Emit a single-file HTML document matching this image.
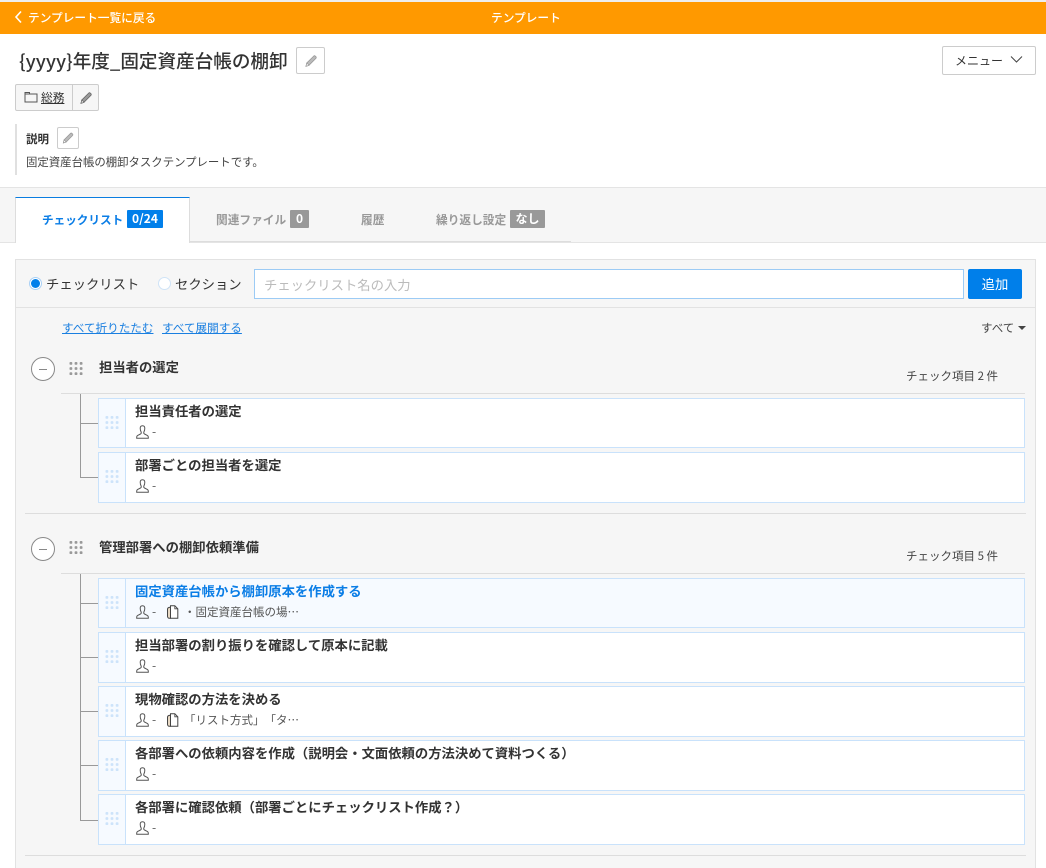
<!DOCTYPE html>
<html lang="ja"><head><meta charset="utf-8"><title>テンプレート</title>
<style>
*{box-sizing:border-box}
html{margin:0;padding:0;width:1046px;height:868px;overflow:hidden}
body{margin:0;padding:0;width:1046px;height:868px;overflow:hidden;background:#fff;position:relative;font-family:"Noto Sans CJK JP","Liberation Sans",sans-serif;color:#333;text-spacing-trim:space-all}
.a{position:absolute;white-space:nowrap}
.pen{position:absolute;background:#fff;border:1px solid #ccc;border-radius:2px}
.pen svg{position:absolute;left:50%;top:50%;transform:translate(-50%,-50%)}
.tab{font-size:11.700px;font-weight:700;color:#999;line-height:18px}
.badge{position:absolute;background:#999;color:#fff;font-size:12px;font-weight:700;text-align:center;border-radius:1px;height:18px;line-height:18px}
.card{position:absolute;left:98px;width:927px;background:#fff;border:1px solid #c9e2fb}
.card.hl{background:#f6faff}
.grip{position:absolute;left:0;top:0;bottom:0;width:27px;background:#f6faff;border-right:1px solid #c9e2fb}
.grip svg{position:absolute;left:6px;top:17px}
.t{position:absolute;left:36px;top:2px;font-size:13.330px;font-weight:700;line-height:20px;white-space:nowrap;color:#333}
.u{position:absolute;left:37px;top:26px}
.d{position:absolute;left:53px;top:24px;font-size:12px;line-height:18px;color:#555}
.c{position:absolute;left:67px;top:26px}
.n{position:absolute;left:85px;top:24px;font-size:11.500px;line-height:18px;color:#555;white-space:nowrap}
.h{position:absolute;background:#ddd;height:1px}
.v{position:absolute;background:#999}
.sec{font-size:13.330px;font-weight:700;line-height:20px;color:#333}
.cnt{font-size:11.500px;line-height:16px;color:#444}
.minus{position:absolute;left:31px;width:24px;height:24px;border:1px solid #888;border-radius:50%;background:#fff}
.minus:after{content:"";position:absolute;left:7px;top:10.500px;width:8px;height:1px;background:#888}
</style></head><body>
<svg width="0" height="0" style="position:absolute">
<symbol id="pen" viewBox="0 0 14 14"><path d="M2 12.300l.8-3.300L9.700 2.100c.5-.5 1.100-.5 1.600 0l.6.600c.5.500.5 1.100 0 1.600L5 11.300z" fill="#bbb" stroke="#999" stroke-width=".8"/><path d="M2 12.300l.8-3.300 2.200 2.300z" fill="#fff" stroke="#999" stroke-width=".7"/></symbol>
<symbol id="pen2" viewBox="0 0 14 14"><path d="M2 12.300l.8-3.300L9.700 2.100c.5-.5 1.100-.5 1.600 0l.6.600c.5.500.5 1.100 0 1.600L5 11.300z" fill="#999" stroke="#666" stroke-width=".8"/><path d="M2 12.300l.8-3.300 2.200 2.300z" fill="#fff" stroke="#666" stroke-width=".7"/></symbol>
<symbol id="user" viewBox="0 0 13 14"><path d="M6.500 .7C4.900 .7 4.200 1.800 4.200 3.300c0 1.700.5 3.100 1 3.900.2.800 0 1.400-.7 1.800L1.700 10.400c-.6.400-1 .9-1 1.600v1.200h11.600V12c0-.7-.4-1.200-1-1.600L8.500 9c-.7-.4-.9-1-.7-1.800.5-.8 1-2.200 1-3.900C8.800 1.800 8.100 .7 6.500 .7z" fill="none" stroke="#555" stroke-width="1"/></symbol>
<symbol id="clip" viewBox="0 0 13 14"><path d="M4.500 .8h4.300l3 3v9.400H4.500z" fill="#fff" stroke="#444" stroke-width="1"/><path d="M8.800 .8v3h3" fill="none" stroke="#444" stroke-width=".8"/><path d="M4.500 2.300C2.600 2.300 1.500 3 1.500 4.300v6.900c0 1.100.8 2 1.700 2h1.300V2.300z" fill="#e8d9c4" stroke="#444" stroke-width="1"/></symbol>
<symbol id="dots" viewBox="0 0 14 14"><g fill="currentColor"><rect x="0" y="0" width="3" height="3" rx="1"/><rect x="5.500" y="0" width="3" height="3" rx="1"/><rect x="11" y="0" width="3" height="3" rx="1"/><rect x="0" y="5.500" width="3" height="3" rx="1"/><rect x="5.500" y="5.500" width="3" height="3" rx="1"/><rect x="11" y="5.500" width="3" height="3" rx="1"/><rect x="0" y="11" width="3" height="3" rx="1"/><rect x="5.500" y="11" width="3" height="3" rx="1"/><rect x="11" y="11" width="3" height="3" rx="1"/></g></symbol>
</svg>

<div class="a" style="left:0;top:0;width:1046px;height:2px;background:#eee"></div>
<div class="a" style="left:0;top:2px;width:1046px;height:32px;background:#ff9900"></div>
<svg class="a" style="left:14px;top:10px" width="9" height="14" viewBox="0 0 9 14"><path d="M7 1.500L2 7l5 5.500" fill="none" stroke="#fff" stroke-width="1.600"/></svg>
<div class="a" style="left:28px;top:9px;font-size:11.700px;font-weight:500;color:#fff;line-height:18px">テンプレート一覧に戻る</div>
<div class="a" style="left:491px;top:9px;font-size:11.700px;font-weight:500;color:#fff;line-height:18px">テンプレート</div>

<div class="a" style="left:19px;top:47px;font-size:18.600px;font-weight:500;line-height:28px;color:#333">{yyyy}年度_固定資産台帳の棚卸</div>
<div class="pen" style="left:296px;top:47px;width:29px;height:27px"><svg width="14" height="14"><use href="#pen"/></svg></div>

<div class="a" style="left:942px;top:46px;width:94px;height:29px;border:1px solid #ccc;border-radius:2px;background:#fff"></div>
<div class="a" style="left:955px;top:52px;font-size:12px;line-height:17px;color:#333">メニュー</div>
<svg class="a" style="left:1010px;top:55px" width="13" height="9" viewBox="0 0 13 9"><path d="M1 1.500l5.500 5.500 5.500-5.500" fill="none" stroke="#444" stroke-width="1"/></svg>

<div class="a" style="left:15px;top:84px;width:84px;height:27px;border:1px solid #ccc;border-radius:2px;background:#f6f6f6"></div>
<div class="a" style="left:72px;top:85px;width:1px;height:25px;background:#ccc"></div>
<svg class="a" style="left:24px;top:91px" width="14" height="12" viewBox="0 0 14 12"><path d="M1 1.500h4.500v1.500H13v8H1z" fill="none" stroke="#555" stroke-width="1"/><path d="M1 3h5" stroke="#555" stroke-width="1"/></svg>
<div class="a" style="left:41px;top:89px;font-size:11.700px;line-height:18px;color:#333;text-decoration:underline">総務</div>
<svg class="a" style="left:79px;top:91px" width="14" height="14"><use href="#pen2"/></svg>

<div class="a" style="left:15px;top:124px;width:2px;height:51px;background:#e0e0e0"></div>
<div class="a" style="left:26px;top:131px;font-size:11.500px;font-weight:700;line-height:17px;color:#333">説明</div>
<div class="pen" style="left:57px;top:127px;width:22px;height:22px"><svg width="13" height="13"><use href="#pen"/></svg></div>
<div class="a" style="left:26px;top:154px;font-size:11.400px;line-height:16px;color:#444">固定資産台帳の棚卸タスクテンプレートです。</div>

<div class="a" style="left:0;top:187px;width:1046px;height:56px;background:#f6f6f6;border-top:1px solid #e4e4e4;border-bottom:1px solid #e4e4e4"></div>
<div class="a" style="left:190px;top:241px;width:381px;height:1px;background:#ddd"></div>
<div class="a" style="left:15px;top:197px;width:175px;height:46px;background:#fff;border:1px solid #ddd;border-top:1px solid #0a7de0;border-bottom:0"></div>
<div class="a tab" style="left:42px;top:211px;color:#0a7de6;font-size:11.600px">チェックリスト</div>
<div class="badge a" style="left:127px;top:210px;width:36px;background:#007fea">0/24</div>
<div class="a tab" style="left:216px;top:211px">関連ファイル</div>
<div class="badge a" style="left:290px;top:210px;width:19px">0</div>
<div class="a tab" style="left:361px;top:211px">履歴</div>
<div class="a tab" style="left:436px;top:211px">繰り返し設定</div>
<div class="badge a" style="left:510px;top:210px;width:35px">なし</div>

<div class="a" style="left:15px;top:259px;width:1021px;height:609px;background:#f6f6f6;border:1px solid #e2e2e2;border-bottom:0"></div>
<div class="a" style="left:16px;top:307px;width:1019px;height:1px;background:#e2e2e2"></div>

<div class="a" style="left:29px;top:277px;width:13px;height:13px;border-radius:50%;background:#fff;border:1px solid #a9d0f5"></div>
<div class="a" style="left:31px;top:279px;width:9px;height:9px;border-radius:50%;background:#007fea"></div>
<div class="a" style="left:46px;top:274px;font-size:13.330px;line-height:19px;color:#333">チェックリスト</div>
<div class="a" style="left:158px;top:277px;width:13px;height:13px;border-radius:50%;background:#fff;border:1px solid #cfe3f7"></div>
<div class="a" style="left:175px;top:274px;font-size:13.330px;line-height:19px;color:#333">セクション</div>
<div class="a" style="left:254px;top:269px;width:710px;height:30px;background:#fff;border:1px solid #9ccbf5"></div>
<div class="a" style="left:264px;top:275px;font-size:13.330px;line-height:19px;color:#bbb">チェックリスト名の入力</div>
<div class="a" style="left:968px;top:269px;width:54px;height:30px;background:#007fea;border-radius:2px;color:#fff;font-size:13.330px;line-height:30px;text-align:center">追加</div>

<div class="a" style="left:62px;top:320px;font-size:11.600px;line-height:17px;color:#1a7fe0;text-decoration:underline">すべて折りたたむ</div>
<div class="a" style="left:162px;top:320px;font-size:11.600px;line-height:17px;color:#1a7fe0;text-decoration:underline">すべて展開する</div>
<div class="a" style="left:981px;top:320px;font-size:11.500px;line-height:17px;color:#444">すべて</div>
<div class="a" style="left:1018px;top:326px;width:0;height:0;border-left:4px solid transparent;border-right:4px solid transparent;border-top:4px solid #444"></div>

<!-- section 1 -->
<div class="minus" style="top:357px"></div>
<svg class="a" style="left:69px;top:362px;color:#999" width="14" height="13"><use href="#dots"/></svg>
<div class="a sec" style="left:99px;top:357px">担当者の選定</div>
<div class="a cnt" style="left:906px;top:368px">チェック項目 2 件</div>
<div class="h" style="left:61px;top:393px;width:964px"></div>
<div class="v" style="left:80px;top:394px;width:1px;height:84px"></div>
<div class="v" style="left:80px;top:423px;width:18px;height:1px"></div>
<div class="v" style="left:80px;top:477px;width:18px;height:1px"></div>

<div class="card" style="top:398px;height:50px"><div class="grip" style="color:#cde3fa"><svg width="14" height="13"><use href="#dots"/></svg></div><div class="t">担当責任者の選定</div><svg class="u" width="13" height="14"><use href="#user"/></svg><div class="d">-</div></div>
<div class="card" style="top:452px;height:51px"><div class="grip" style="color:#cde3fa"><svg width="14" height="13"><use href="#dots"/></svg></div><div class="t">部署ごとの担当者を選定</div><svg class="u" width="13" height="14"><use href="#user"/></svg><div class="d">-</div></div>

<div class="h" style="left:25px;top:513px;width:1001px"></div>

<!-- section 2 -->
<div class="minus" style="top:537px"></div>
<svg class="a" style="left:69px;top:541px;color:#999" width="14" height="13"><use href="#dots"/></svg>
<div class="a sec" style="left:99px;top:537px">管理部署への棚卸依頼準備</div>
<div class="a cnt" style="left:906px;top:548px">チェック項目 5 件</div>
<div class="h" style="left:61px;top:573px;width:964px"></div>
<div class="v" style="left:80px;top:574px;width:1px;height:247px"></div>
<div class="v" style="left:80px;top:603px;width:18px;height:1px"></div>
<div class="v" style="left:80px;top:657px;width:18px;height:1px"></div>
<div class="v" style="left:80px;top:711px;width:18px;height:1px"></div>
<div class="v" style="left:80px;top:765px;width:18px;height:1px"></div>
<div class="v" style="left:80px;top:820px;width:18px;height:1px"></div>

<div class="card hl" style="top:578px;height:50px"><div class="grip" style="color:#cde3fa"><svg width="14" height="13"><use href="#dots"/></svg></div><div class="t" style="color:#0a7de6">固定資産台帳から棚卸原本を作成する</div><svg class="u" width="13" height="14"><use href="#user"/></svg><div class="d">-</div><svg class="c" width="13" height="14"><use href="#clip"/></svg><div class="n">・固定資産台帳の場…</div></div>
<div class="card" style="top:632px;height:51px"><div class="grip" style="color:#cde3fa"><svg width="14" height="13"><use href="#dots"/></svg></div><div class="t">担当部署の割り振りを確認して原本に記載</div><svg class="u" width="13" height="14"><use href="#user"/></svg><div class="d">-</div></div>
<div class="card" style="top:686px;height:51px"><div class="grip" style="color:#cde3fa"><svg width="14" height="13"><use href="#dots"/></svg></div><div class="t">現物確認の方法を決める</div><svg class="u" width="13" height="14"><use href="#user"/></svg><div class="d">-</div><svg class="c" width="13" height="14"><use href="#clip"/></svg><div class="n">「リスト方式」「タ…</div></div>
<div class="card" style="top:740px;height:51px"><div class="grip" style="color:#cde3fa"><svg width="14" height="13"><use href="#dots"/></svg></div><div class="t">各部署への依頼内容を作成（説明会・文面依頼の方法決めて資料つくる）</div><svg class="u" width="13" height="14"><use href="#user"/></svg><div class="d">-</div></div>
<div class="card" style="top:794px;height:51px"><div class="grip" style="color:#cde3fa"><svg width="14" height="13"><use href="#dots"/></svg></div><div class="t">各部署に確認依頼（部署ごとにチェックリスト作成？）</div><svg class="u" width="13" height="14"><use href="#user"/></svg><div class="d">-</div></div>

<div class="h" style="left:25px;top:855px;width:1001px"></div>
</body></html>
